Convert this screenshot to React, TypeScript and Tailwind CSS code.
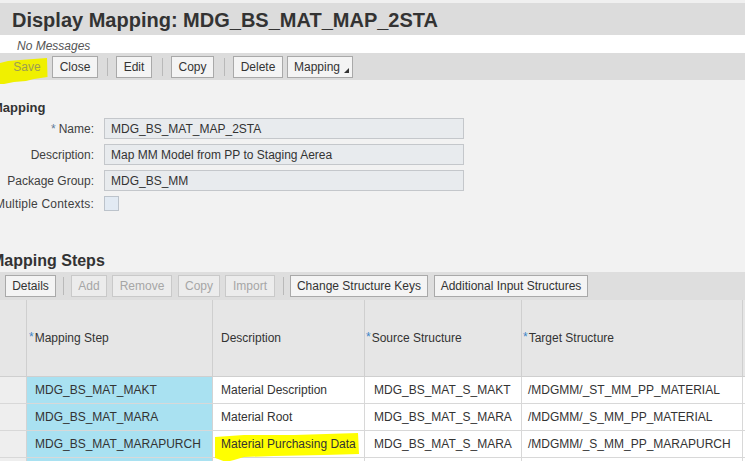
import React from "react";

const btnOn =
  "h-[22px] shrink-0 flex items-center justify-center border border-[#a9a9a9] bg-[#f4f4f4] text-[12px] text-[#333333] leading-none";
const btnOff =
  "h-[22px] shrink-0 flex items-center justify-center border border-[#c9c9c9] bg-[#ececec] text-[12px] text-[#a6a6a6] leading-none";
const sep = "w-px h-[18px] bg-[#b9b9b9] shrink-0";

function Star() {
  return <span className="text-[#3d85c6] text-[12px] relative top-[-1px] mr-px">*</span>;
}

function FormRow({ label, value, star }: { label: string; value: string; star?: boolean }) {
  return (
    <div className="flex items-center h-[21px]">
      <div className="w-[95px] pr-px flex justify-end whitespace-nowrap text-[12px] text-[#404040]">
        {star ? <span className="text-[#5f7a98] mr-[3px]">*</span> : null}
        {label}
      </div>
      <div className="ml-[9px] w-[360px] h-[21px] border border-[#c4c7cb] bg-[#e8ebee] pl-[6px] flex items-center text-[12px] text-[#333333] whitespace-nowrap">
        {value}
      </div>
    </div>
  );
}

const rows = [
  ["MDG_BS_MAT_MAKT", "Material Description", "MDG_BS_MAT_S_MAKT", "/MDGMM/_ST_MM_PP_MATERIAL"],
  ["MDG_BS_MAT_MARA", "Material Root", "MDG_BS_MAT_S_MARA", "/MDGMM/_S_MM_PP_MATERIAL"],
  ["MDG_BS_MAT_MARAPURCH", "Material Purchasing Data", "MDG_BS_MAT_S_MARA", "/MDGMM/_S_MM_PP_MARAPURCH"],
  ["", "", "", ""],
];

export default function App() {
  return (
    <div className="w-[745px] h-[461px] overflow-hidden relative bg-[#f2f2f2] font-['Liberation_Sans',Arial,Helvetica,sans-serif]">
      <div className="h-[3px] bg-[#f0f0f0]" />
      {/* Title */}
      <div className="h-[32px] bg-[#dcdcdc] flex items-center pl-[12px] pt-[2px]">
        <span className="text-[20px] font-bold text-[#333333] whitespace-nowrap">
          Display Mapping: MDG_BS_MAT_MAP_2STA
        </span>
      </div>
      {/* Messages */}
      <div className="h-[18px] bg-white pl-[17px] pt-[4px] text-[12px] leading-[14px] italic text-[#555555]">
        No Messages
      </div>
      {/* Toolbar 1 */}
      <div className="h-[27px] bg-[#dcdcdc] flex items-center relative">
        <svg className="absolute left-0 top-[5px]" width="48" height="30" viewBox="0 0 48 30">
          <path d="M0,5 L8,3 L20,2 L47,0 L47.5,19 L34,21 L26,23 L14,24 L4,26 L0,26 Z" fill="#f0f000" />
        </svg>
        <div className="relative ml-[7px] w-[40px] h-[22px] flex items-center justify-center text-[12px] text-[#9d9d52]">
          Save
        </div>
        <div className={btnOn + " ml-[5px] w-[46px]"}>Close</div>
        <div className={sep + " ml-[9px]"} />
        <div className={btnOn + " ml-[8px] w-[36px]"}>Edit</div>
        <div className={sep + " ml-[10px]"} />
        <div className={btnOn + " ml-[8px] w-[43px]"}>Copy</div>
        <div className={sep + " ml-[10px]"} />
        <div className={btnOn + " ml-[8px] w-[50px]"}>Delete</div>
        <div className={btnOn + " ml-[4px] w-[66px] relative !justify-start pl-[6px]"}>
          Mapping
          <svg className="absolute right-[3px] bottom-[4px]" width="5" height="5" viewBox="0 0 5 5">
            <path d="M5,0 L5,5 L0,5 Z" fill="#333333" />
          </svg>
        </div>
      </div>

      {/* Form */}
      <div className="pt-[20px]">
        <div className="h-[16px] leading-[16px] text-[13px] font-bold text-[#333333] -ml-[8px] whitespace-nowrap">
          Mapping
        </div>
        <div className="mt-[2px] flex flex-col gap-[5px]">
          <FormRow label="Name:" value="MDG_BS_MAT_MAP_2STA" star />
          <FormRow label="Description:" value="Map MM Model from PP to Staging Aerea" />
          <FormRow label="Package Group:" value="MDG_BS_MM" />
          <div className="flex items-center h-[15px]">
            <div className="w-[95px] pr-px flex justify-end whitespace-nowrap text-[12px] text-[#404040] tracking-[0.2px]">
              Multiple Contexts:
            </div>
            <div className="ml-[9px] w-[15px] h-[15px] border border-[#bcc3cb] bg-[#e2eaf3]" />
          </div>
        </div>
      </div>

      {/* Mapping Steps */}
      <div className="mt-[41px] h-[18px] leading-[18px] text-[16px] font-bold text-[#333333] -ml-[9px] whitespace-nowrap">
        Mapping Steps
      </div>
      <div className="mt-[2px] h-[28px] bg-[#dedede] flex items-center">
        <div className={btnOn + " ml-[5px] w-[51px]"}>Details</div>
        <div className={sep + " ml-[7px]"} />
        <div className={btnOff + " ml-[7px] w-[36px]"}>Add</div>
        <div className={btnOff + " ml-[5px] w-[60px]"}>Remove</div>
        <div className={btnOff + " ml-[6px] w-[42px]"}>Copy</div>
        <div className={btnOff + " ml-[5px] w-[50px]"}>Import</div>
        <div className={sep + " ml-[8px]"} />
        <div className={btnOn + " ml-[6px] w-[138px]"}>Change Structure Keys</div>
        <div className={btnOn + " ml-[6px] w-[154px]"}>Additional Input Structures</div>
      </div>

      {/* Table */}
      <div className="text-[12px] text-[#333333]">
        <div className="flex h-[77px] bg-[#e6e6e6] border-b border-[#cfcfcf]">
          <div className="w-[27px] shrink-0 border-r border-[#cfcfcf]" />
          <div className="w-[186px] shrink-0 border-r border-[#cfcfcf] pl-[2px] flex items-center whitespace-nowrap">
            <Star />
            Mapping Step
          </div>
          <div className="w-[152px] shrink-0 border-r border-[#cfcfcf] pl-[8px] flex items-center whitespace-nowrap">
            Description
          </div>
          <div className="w-[157px] shrink-0 border-r border-[#cfcfcf] pl-[1px] flex items-center whitespace-nowrap">
            <Star />
            Source Structure
          </div>
          <div className="w-[221px] shrink-0 border-r border-[#cfcfcf] pl-[1px] flex items-center whitespace-nowrap">
            <Star />
            Target Structure
          </div>
          <div className="flex-1" />
        </div>
        {rows.map((r, i) => (
          <div key={i} className="flex h-[27px] border-b border-[#d8d8d8] bg-white">
            <div className="w-[27px] shrink-0 border-r border-[#d3d3d3] bg-[#eeeeee]" />
            <div className="w-[186px] shrink-0 border-r border-[#d3d3d3] bg-[#a9e1f1] pl-[8px] flex items-center whitespace-nowrap">
              {r[0]}
            </div>
            <div className="w-[152px] shrink-0 border-r border-[#d8d8d8] pl-[8px] flex items-center whitespace-nowrap relative">
              {i === 2 ? (
                <svg className="absolute left-[1px] top-[2px]" width="146" height="30" viewBox="0 0 146 30">
                  <path
                    d="M1,4 L30,2 L80,2 L144,0 L145,21 L110,22 L60,23 L30,24 L20,27 L12,29 L4,26 L1,25 Z"
                    fill="#ffff00"
                  />
                </svg>
              ) : null}
              <span className="relative">{r[1]}</span>
            </div>
            <div className="w-[157px] shrink-0 border-r border-[#d8d8d8] pl-[9px] flex items-center whitespace-nowrap">
              {r[2]}
            </div>
            <div className="w-[221px] shrink-0 border-r border-[#d8d8d8] pl-[6px] flex items-center whitespace-nowrap">
              {r[3]}
            </div>
            <div className="flex-1" />
          </div>
        ))}
      </div>
    </div>
  );
}
